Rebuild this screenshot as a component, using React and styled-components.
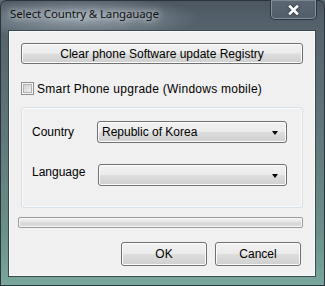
import React from "react";
import styled, { createGlobalStyle } from "styled-components";

const Global = createGlobalStyle`
  html, body { margin: 0; padding: 0; }
  body { width: 325px; height: 286px; overflow: hidden; background: #5c6a70; }
`;

const Window = styled.div`
  width: 325px;
  height: 286px;
  box-sizing: border-box;
  display: flex;
  flex-direction: column;
  padding: 0 9px 9px 8px;
  border-radius: 6px 6px 0 0;
  background:
    radial-gradient(ellipse 120px 22px at 80px 18px, rgba(200, 212, 222, 0.55), rgba(200, 212, 222, 0) 100%),
    linear-gradient(to bottom, #4c5661 0px, #56636d 30px, #5f7479 120px, #6a8f89 230px, #79a79d 286px);
  box-shadow: inset 0 0 0 1px #2c343b;
  font-family: "Liberation Sans", Arial, sans-serif;
`;

const TitleBar = styled.div`
  height: 30px;
  display: flex;
  align-items: flex-start;
  justify-content: space-between;
  flex: none;
`;

const Title = styled.div`
  font-family: "Noto Sans", "Open Sans", sans-serif;
  font-size: 11.5px;
  color: #111;
  margin-top: 6px;
  margin-left: 2px;
  text-shadow: 0 0 6px rgba(235, 240, 245, 0.9), 0 0 10px rgba(235, 240, 245, 0.6);
  letter-spacing: -0.15px;
`;

const CloseButton = styled.div`
  width: 47px;
  height: 20px;
  box-sizing: border-box;
  margin-right: -1px;
  border: 1px solid #2b363f;
  border-top: none;
  border-radius: 0 0 5px 5px;
  box-shadow: inset 0 0 0 1px rgba(190, 205, 215, 0.45);
  background: linear-gradient(to bottom, rgba(120, 135, 150, 0.35), rgba(80, 95, 108, 0.25));
  display: flex;
  align-items: center;
  justify-content: center;
`;

const CloseIcon = styled.svg`
  width: 11px;
  height: 10px;
  filter: drop-shadow(0 0 1px rgba(20, 25, 30, 0.9));
`;

const Client = styled.div`
  flex: 1;
  background: #f0f0f0;
  border: 1px solid #3a4a4c;
  box-shadow: inset 0 0 0 1px #fafafa;
  display: flex;
  flex-direction: column;
  font-family: "Liberation Sans", Arial, sans-serif;
  font-size: 12px;
  color: #000;
`;

const WideButton = styled.div`
  margin: 12px 12px 0 12px;
  height: 21px;
  box-sizing: border-box;
  border: 1px solid #707070;
  border-radius: 3px;
  box-shadow: inset 0 0 0 1px #fcfcfc;
  background: linear-gradient(to bottom, #f2f2f2 0%, #ebebeb 48%, #dddddd 52%, #cfcfcf 100%);
  display: flex;
  align-items: center;
  justify-content: center;
`;

const CheckRow = styled.label`
  margin: 18px 0 0 12px;
  display: flex;
  align-items: center;
  gap: 3px;
  height: 13px;
  letter-spacing: 0.25px;
`;

const CheckBox = styled.span`
  width: 13px;
  height: 13px;
  box-sizing: border-box;
  border: 1px solid #8e8f8f;
  background: linear-gradient(135deg, #cbcbcb 0%, #f6f6f6 100%);
  box-shadow: inset 0 0 0 1px #f4f4f4, inset 0 0 0 2px #aeb3b9;
`;

const GroupBox = styled.div`
  margin: 12px 12px 0 12px;
  height: 101px;
  box-sizing: border-box;
  border: 1px solid #d5dfe5;
  border-radius: 3px;
  box-shadow: inset 0 0 0 1px #fbfbfb;
  padding: 13px 15px 0 10px;
  display: flex;
  flex-direction: column;
  gap: 21px;
`;

const FieldRow = styled.div`
  display: flex;
  align-items: center;
  height: 22px;
`;

const FieldLabel = styled.span`
  width: 65px;
  flex: none;
  margin-top: ${(p) => p.$lift || 0}px;
`;

const Combo = styled.div`
  margin-left: ${(p) => p.$shift || 0}px;
  flex: 1;
  height: 22px;
  box-sizing: border-box;
  border: 1px solid #707070;
  border-radius: 3px;
  box-shadow: inset 0 0 0 1px #fcfcfc;
  background: linear-gradient(to bottom, #f2f2f2 0%, #ebebeb 48%, #dddddd 52%, #cfcfcf 100%);
  display: flex;
  align-items: center;
  padding: 0 8px 0 4px;
`;

const ComboText = styled.span`
  flex: 1;
`;

const Arrow = styled.span`
  width: 0;
  height: 0;
  border-left: 3.5px solid transparent;
  border-right: 3.5px solid transparent;
  border-top: 4px solid #000;
  margin-top: 2px;
`;

const Progress = styled.div`
  margin: 9px 12px 0 9px;
  height: 11px;
  box-sizing: border-box;
  border: 1px solid #9c9c9c;
  border-radius: 2px;
  box-shadow: inset 0 0 0 1px #f6f6f6;
  background: linear-gradient(to bottom, #f3f3f3 0%, #e6e6e6 45%, #d6d6d6 55%, #dcdcdc 100%);
`;

const ButtonBar = styled.div`
  margin: 14px 14px 0 0;
  display: flex;
  justify-content: flex-end;
  gap: 8px;
`;

const DialogButton = styled.div`
  width: 86px;
  height: 24px;
  box-sizing: border-box;
  border: 1px solid #707070;
  border-radius: 3px;
  box-shadow: inset 0 0 0 1px #fcfcfc;
  background: linear-gradient(to bottom, #f2f2f2 0%, #ebebeb 48%, #dddddd 52%, #cfcfcf 100%);
  display: flex;
  align-items: center;
  justify-content: center;
`;

export default function App() {
  return (
    <>
      <Global />
      <Window>
        <TitleBar>
          <Title>Select Country &amp; Langauage</Title>
          <CloseButton>
            <CloseIcon viewBox="0 0 11 10">
              <path d="M2 1.5 L9 8.5 M9 1.5 L2 8.5" stroke="#fff" strokeWidth="2.6" strokeLinecap="square" />
            </CloseIcon>
          </CloseButton>
        </TitleBar>
        <Client>
          <WideButton>Clear phone Software update Registry</WideButton>
          <CheckRow>
            <CheckBox />
            <span>Smart Phone upgrade (Windows mobile)</span>
          </CheckRow>
          <GroupBox>
            <FieldRow>
              <FieldLabel>Country</FieldLabel>
              <Combo>
                <ComboText>Republic of Korea</ComboText>
                <Arrow />
              </Combo>
            </FieldRow>
            <FieldRow>
              <FieldLabel $lift={-6}>Language</FieldLabel>
              <Combo $shift={1}>
                <ComboText />
                <Arrow />
              </Combo>
            </FieldRow>
          </GroupBox>
          <Progress />
          <ButtonBar>
            <DialogButton>OK</DialogButton>
            <DialogButton>Cancel</DialogButton>
          </ButtonBar>
        </Client>
      </Window>
    </>
  );
}
